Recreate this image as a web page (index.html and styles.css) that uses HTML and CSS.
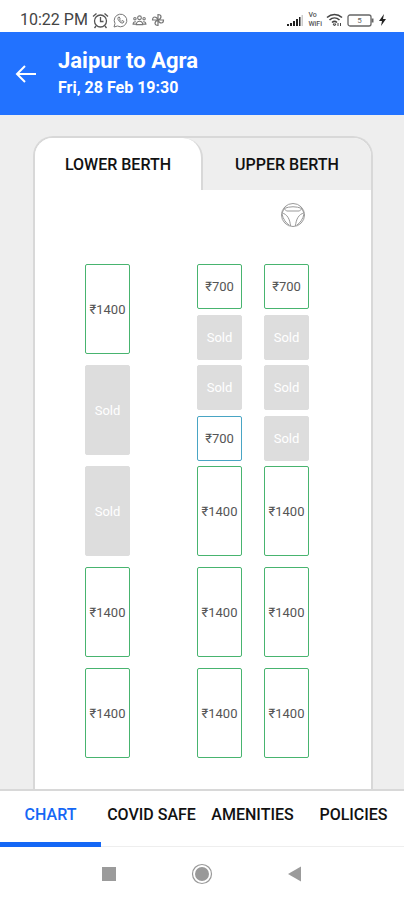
FILE: index.html
```html
<!DOCTYPE html>
<html lang="en">
<head>
<meta charset="utf-8">
<meta name="viewport" content="width=device-width, initial-scale=1">
<title>Jaipur to Agra</title>
<link rel="stylesheet" href="styles.css">
</head>
<body>
<div class="status">
  <span class="time">10:22 PM</span>
  <svg width="17" height="17" viewBox="0 0 17 17" fill="none" stroke="#555" stroke-width="1.3"><circle cx="8.500" cy="9" r="6"/><path d="M8.500 5v4.500h3M1 4.500 4.500 1.500M16 4.500 12.500 1.500M4 14l-1.500 2M13 14l1.500 2"/></svg>
  <svg width="15" height="15" viewBox="0 0 15 15" fill="none" stroke="#777" stroke-width="1"><path d="M1 14l1-3.500A6.300 6.300 0 1 1 4.500 13z"/><path d="M5 4.500c-.8 2.500 2.500 6 5 5.500l1-1.500-2-1-1 1L6.500 7l.7-1-.9-2z"/></svg>
  <svg width="15" height="11" viewBox="0 0 16 12" fill="none" stroke="#777" stroke-width="1.200"><circle cx="8" cy="3" r="2"/><circle cx="3" cy="4" r="1.300"/><circle cx="13" cy="4" r="1.300"/><path d="M4.500 10.500c0-5 7-5 7 0zM4 7.500C2 7 1 8.500 1 10h3M12 7.500c2-.5 3 1 3 2.500h-3"/></svg>
  <svg width="14" height="14" viewBox="0 0 14 14" fill="none" stroke="#777" stroke-width="1.200"><path d="M7 7V1.500c4 0 4 4 0 5.500M7 7h5.500c0 4-4 4-5.500 0M7 7v5.500c-4 0-4-4 0-5.500M7 7H1.500c0-4 4-4 5.500 0"/></svg>
  <span class="fill"></span>
  <svg width="17" height="13" viewBox="0 0 17 13"><path fill="#222" d="M0 10h2v2H0zM3 9h2v3H3zM6 7h2v5H6zM9 5h2v7H9zM12 3h1.500v9H12z"/><path fill="#ccc" d="M14.500 1H16v11h-1.500z"/></svg>
  <span class="vowifi"><span>Vo</span><span>WiFi</span></span>
  <svg width="17" height="14" viewBox="0 0 17 14" fill="none" stroke="#444" stroke-width="1.600"><path d="M1 4.500c4.500-4 10.500-4 15 0M3.500 7c3-2.700 7-2.700 10 0M6 9.500c1.500-1.300 3.500-1.300 5 0"/><path d="M7 11h3l-1.500 2zM12 13v-3M14.500 10v3" stroke-width="1"/></svg>
  <svg width="28" height="13" viewBox="0 0 28 13"><rect x="1" y="1" width="23" height="11" rx="2" fill="none" stroke="#666" stroke-width="1.300"/><path d="M25.500 4.500v4" stroke="#666" stroke-width="2"/><text x="12.500" y="9" text-anchor="middle" class="level">5</text></svg>
  <svg width="7" height="12" viewBox="0 0 7 12" fill="#222"><path d="M5 0 0 7h3L2 12l5-7H4z"/></svg>
</div>

<header class="header">
  <button class="back" aria-label="Back"><svg width="22" height="18" viewBox="0 0 22 18" fill="none" stroke="#fff" stroke-width="2"><path d="M21 9H2M10 1 2 9l8 8"/></svg></button>
  <div>
    <h1>Jaipur to Agra</h1>
    <p>Fri, 28 Feb 19:30</p>
  </div>
</header>

<main class="main">
  <section class="deck">
    <div class="berths">
      <button class="berth active">LOWER BERTH</button>
      <button class="berth">UPPER BERTH</button>
    </div>
    <div class="wheel">
      <svg width="26" height="26" viewBox="0 0 26 26" fill="none" stroke="#999" stroke-width="1"><circle cx="13" cy="13" r="11.500"/><path d="M4 6.500Q13 3 22 6.500L19.500 9h-13zM2 11c5 1 8 6 8.500 13M2 12c1 5 4 9 7 11M24 11c-5 1-8 6-8.500 13M24 12c-1 5-4 9-7 11M4 7l-2 4M22 7l2 4"/></svg>
    </div>
    <div class="seats">
      <div class="column">
        <div class="group"><button class="seat sleeper">₹1400</button></div>
        <div class="group"><button class="seat sleeper sold" disabled>Sold</button></div>
        <div class="group"><button class="seat sleeper sold" disabled>Sold</button></div>
        <div class="group"><button class="seat sleeper">₹1400</button></div>
        <div class="group"><button class="seat sleeper">₹1400</button></div>
      </div>
      <div class="column">
        <div class="group"><button class="seat">₹700</button><button class="seat sold" disabled>Sold</button></div>
        <div class="group"><button class="seat sold" disabled>Sold</button><button class="seat reserved">₹700</button></div>
        <div class="group"><button class="seat sleeper">₹1400</button></div>
        <div class="group"><button class="seat sleeper">₹1400</button></div>
        <div class="group"><button class="seat sleeper">₹1400</button></div>
      </div>
      <div class="column">
        <div class="group"><button class="seat">₹700</button><button class="seat sold" disabled>Sold</button></div>
        <div class="group"><button class="seat sold" disabled>Sold</button><button class="seat sold" disabled>Sold</button></div>
        <div class="group"><button class="seat sleeper">₹1400</button></div>
        <div class="group"><button class="seat sleeper">₹1400</button></div>
        <div class="group"><button class="seat sleeper">₹1400</button></div>
      </div>
    </div>
  </section>
</main>

<nav class="tabs">
  <a class="tab current" href="#chart">CHART</a>
  <a class="tab" href="#covid">COVID SAFE</a>
  <a class="tab" href="#amenities">AMENITIES</a>
  <a class="tab" href="#policies">POLICIES</a>
</nav>

<div class="system">
  <button aria-label="Recent apps"><svg width="22" height="22" viewBox="0 0 22 22"><path fill="#9b9b9b" d="M4 4h14v14H4z"/></svg></button>
  <button aria-label="Home"><svg width="22" height="22" viewBox="0 0 22 22"><circle cx="11" cy="11" r="9.500" fill="none" stroke="#999" stroke-width="1.200"/><circle cx="11" cy="11" r="7" fill="#999"/></svg></button>
  <button aria-label="Go back"><svg width="22" height="22" viewBox="0 0 22 22"><path fill="#9b9b9b" d="M17 3.500v15L4 11z"/></svg></button>
</div>
</body>
</html>
```

FILE: styles.css
```css
* {
  box-sizing: border-box;
}

body {
  margin: 0;
  min-height: 100vh;
  display: flex;
  flex-direction: column;
  background: #fff;
  color: #111;
  font-family: Roboto, "Liberation Sans", sans-serif;
}

button {
  margin: 0;
  padding: 0;
  border: 0;
  background: none;
  color: inherit;
  font: inherit;
}

svg {
  display: block;
  flex: none;
}

.status {
  display: flex;
  align-items: center;
  gap: 4px;
  height: 32px;
  padding: 8px 18px 0 20px;
}

.time {
  color: #444;
  font-size: 16px;
  line-height: 20px;
  white-space: nowrap;
}

.fill {
  flex: 1;
}

.vowifi {
  display: flex;
  flex-direction: column;
  color: #555;
  font-size: 7px;
  font-weight: 500;
  line-height: 9px;
}

.level {
  fill: #666;
  font-size: 8px;
}

.header {
  display: flex;
  align-items: center;
  gap: 21px;
  height: 83px;
  padding: 0 15px;
  background: #2272ff;
  color: #fff;
}

.header h1 {
  margin: 0;
  font-size: 22px;
  font-weight: 700;
  line-height: 28px;
}

.header p {
  margin: 0;
  font-size: 16px;
  font-weight: 700;
  line-height: 26px;
}

.main {
  flex: 1;
  display: flex;
  padding: 21px 31px 0 33px;
  background: #eee;
}

.deck {
  flex: 1;
  border: 2px solid #d8d8d8;
  border-bottom: 0;
  border-radius: 20px 20px 0 0;
  background: #fff;
  overflow: hidden;
}

.berths {
  display: grid;
  grid-template-columns: 1fr 1fr;
  background: #eee;
}

.berth {
  height: 52px;
  font-size: 16px;
  font-weight: 500;
}

.berth.active {
  border-right: 2px solid #d8d8d8;
  border-radius: 0 20px 0 0;
  background: #fff;
}

.wheel {
  display: flex;
  justify-content: flex-end;
  padding: 12px 65px 0 0;
}

.seats {
  display: grid;
  grid-template-columns: 1fr auto auto;
  column-gap: 22px;
  padding: 36px 62px 0 50px;
}

.column,
.group {
  display: flex;
  flex-direction: column;
}

.column {
  gap: 5px;
}

.group {
  gap: 6px;
  height: 96px;
}

.seat {
  width: 45px;
  height: 45px;
  border: 1px solid #48b46f;
  border-radius: 2px;
  color: #555;
  font-size: 13px;
}

.sleeper {
  height: 90px;
}

.reserved {
  border-color: #49a5c4;
}

.sold {
  border-color: #ddd;
  background: #ddd;
  color: #fff;
}

.tabs {
  display: grid;
  grid-template-columns: repeat(4, 1fr);
  height: 58px;
  border-top: 2px solid #d8d8d8;
}

.tab {
  padding-top: 14px;
  border-bottom: 1px solid #eee;
  color: #111;
  font-size: 16px;
  font-weight: 500;
  line-height: 20px;
  text-align: center;
  text-decoration: none;
  white-space: nowrap;
}

.current {
  border-bottom: 5px solid #1467f5;
  color: #1467f5;
}

.system {
  display: flex;
  align-items: center;
  justify-content: center;
  gap: 71px;
  height: 53px;
}
```
